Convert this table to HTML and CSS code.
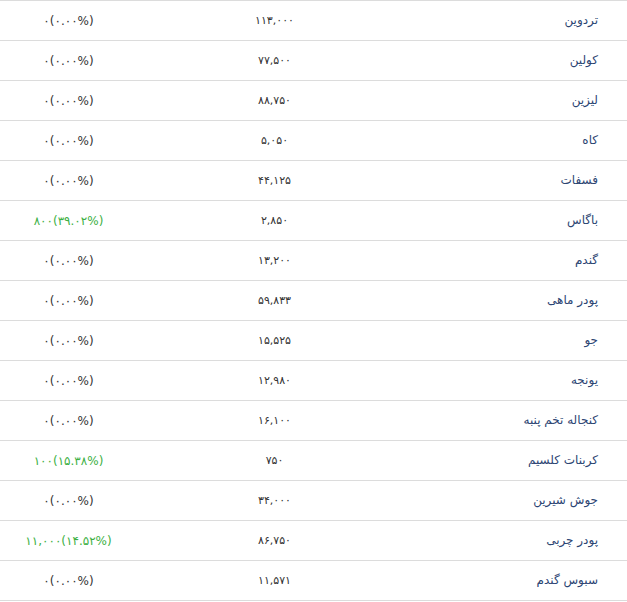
FILE: index.html
```html
<!DOCTYPE html>
<html lang="fa" dir="rtl">
<head>
<meta charset="utf-8">
<link rel="stylesheet" href="styles.css">
</head>
<body>
<div class="table">
  <div class="row"><div class="name">تردوین</div><div class="price">۱۱۳,۰۰۰</div><div class="change">۰(۰.۰۰%)</div></div>
  <div class="row"><div class="name">کولین</div><div class="price">۷۷,۵۰۰</div><div class="change">۰(۰.۰۰%)</div></div>
  <div class="row"><div class="name">لیزین</div><div class="price">۸۸,۷۵۰</div><div class="change">۰(۰.۰۰%)</div></div>
  <div class="row"><div class="name">کاه</div><div class="price">۵,۰۵۰</div><div class="change">۰(۰.۰۰%)</div></div>
  <div class="row"><div class="name">فسفات</div><div class="price">۴۴,۱۲۵</div><div class="change">۰(۰.۰۰%)</div></div>
  <div class="row"><div class="name">باگاس</div><div class="price">۲,۸۵۰</div><div class="change up">۸۰۰(۳۹.۰۲%)</div></div>
  <div class="row"><div class="name">گندم</div><div class="price">۱۳,۲۰۰</div><div class="change">۰(۰.۰۰%)</div></div>
  <div class="row"><div class="name">پودر ماهی</div><div class="price">۵۹,۸۳۳</div><div class="change">۰(۰.۰۰%)</div></div>
  <div class="row"><div class="name">جو</div><div class="price">۱۵,۵۲۵</div><div class="change">۰(۰.۰۰%)</div></div>
  <div class="row"><div class="name">یونجه</div><div class="price">۱۲,۹۸۰</div><div class="change">۰(۰.۰۰%)</div></div>
  <div class="row"><div class="name">کنجاله تخم پنبه</div><div class="price">۱۶,۱۰۰</div><div class="change">۰(۰.۰۰%)</div></div>
  <div class="row"><div class="name">کربنات کلسیم</div><div class="price">۷۵۰</div><div class="change up">۱۰۰(۱۵.۳۸%)</div></div>
  <div class="row"><div class="name">جوش شیرین</div><div class="price">۳۴,۰۰۰</div><div class="change">۰(۰.۰۰%)</div></div>
  <div class="row"><div class="name">پودر چربی</div><div class="price">۸۶,۷۵۰</div><div class="change up">۱۱,۰۰۰(۱۴.۵۲%)</div></div>
  <div class="row"><div class="name">سبوس گندم</div><div class="price">۱۱,۵۷۱</div><div class="change">۰(۰.۰۰%)</div></div>
</div>
</body>
</html>
```
FILE: styles.css
```css
html, body {
  margin: 0;
  padding: 0;
  background: #fff;
}
body {
  font-family: "DejaVu Sans", "Noto Sans", sans-serif;
  font-size: 12px;
}
.table {
  width: 627px;
  border-top: 1px solid #dcdcdc;
}
.row {
  display: grid;
  grid-template-columns: 218px 272px 137px;
  height: 39px;
  border-bottom: 1px solid #dcdcdc;
  align-items: center;
}
.name {
  text-align: right;
  padding-right: 29px;
  padding-bottom: 2px;
  color: #2c4573;
}
.price {
  text-align: center;
  color: #333;
  font-size: 11px;
  letter-spacing: 2.5px;
  padding-left: 3px;
}
.change {
  text-align: center;
  direction: ltr;
  unicode-bidi: isolate;
  color: #333;
  font-size: 12px;
  letter-spacing: 1.8px;
}
.change.up {
  color: #3cb043;
}
```
